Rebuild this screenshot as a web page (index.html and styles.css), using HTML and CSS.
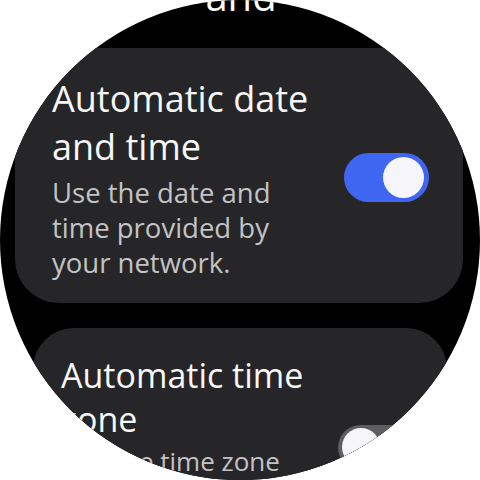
FILE: index.html
```html
<!DOCTYPE html>
<html>
<head>
<meta charset="utf-8">
<link rel="stylesheet" href="styles.css">
</head>
<body>
<div class="watch">
  <div class="header"><div class="header-text">and</div></div>
  <div class="card card-main">
    <div class="text">
      <div class="title">Automatic date and time</div>
      <div class="sub">Use the date and time provided by your network.</div>
    </div>
    <div class="toggle on"><div class="thumb"></div></div>
  </div>
  <div class="card card-small">
    <div class="text">
      <div class="title">Automatic time zone</div>
      <div class="sub">Use the time zone provided by your network.</div>
    </div>
    <div class="toggle off"><div class="thumb"></div></div>
  </div>
</div>
</body>
</html>
```
FILE: styles.css
```css
html, body {
  margin: 0;
  padding: 0;
  background: #ffffff;
}
body {
  font-family: "Open Sans", Roboto, sans-serif;
}
.watch {
  width: 480px;
  height: 480px;
  border-radius: 50%;
  overflow: hidden;
  background: #000000;
  display: flex;
  flex-direction: column;
}
.header {
  height: 48px;
  flex: none;
  text-align: center;
  color: #ffffff;
}
.header-text {
  font-size: 40px;
  line-height: 44px;
  margin-top: -26px;
  padding-left: 2px;
}
.card {
  flex: none;
  background: #262628;
  display: flex;
  justify-content: space-between;
  box-sizing: border-box;
}
.card-main {
  margin-left: 15px;
  width: 448px;
  border-radius: 44px;
  padding: 27px 34px 23px 37px;
}
.card-small {
  margin-left: 33px;
  margin-top: 25px;
  width: 414px;
  border-radius: 41px;
  padding: 25px 31px 21px 28px;
}
.title {
  color: #f7f7f7;
}
.sub {
  color: #c3c3c5;
}
.card-main .text {
  width: 272px;
}
.card-main .title {
  font-size: 36px;
  line-height: 48px;
}
.card-main .sub {
  font-size: 27.5px;
  line-height: 35px;
  margin-top: 4px;
}
.card-small .text {
  width: 270px;
}
.card-small .title {
  font-size: 34px;
  line-height: 44px;
}
.card-small .sub {
  font-size: 26px;
  line-height: 32px;
  margin-top: 4px;
}
.toggle {
  align-self: center;
  flex: none;
  border-radius: 999px;
  display: flex;
  align-items: center;
  box-sizing: border-box;
}
.card-main .toggle {
  width: 85px;
  height: 49px;
  padding: 0 5px;
}
.card-small .toggle {
  width: 78px;
  height: 45px;
  padding: 0 4px;
}
.toggle.on {
  background: #3f66f2;
  justify-content: flex-end;
}
.toggle.off {
  background: #5e5e62;
  justify-content: flex-start;
}
.thumb {
  border-radius: 50%;
  background: #f6f6fa;
}
.card-main .thumb {
  width: 41px;
  height: 41px;
}
.card-small .thumb {
  width: 38px;
  height: 38px;
}
```
